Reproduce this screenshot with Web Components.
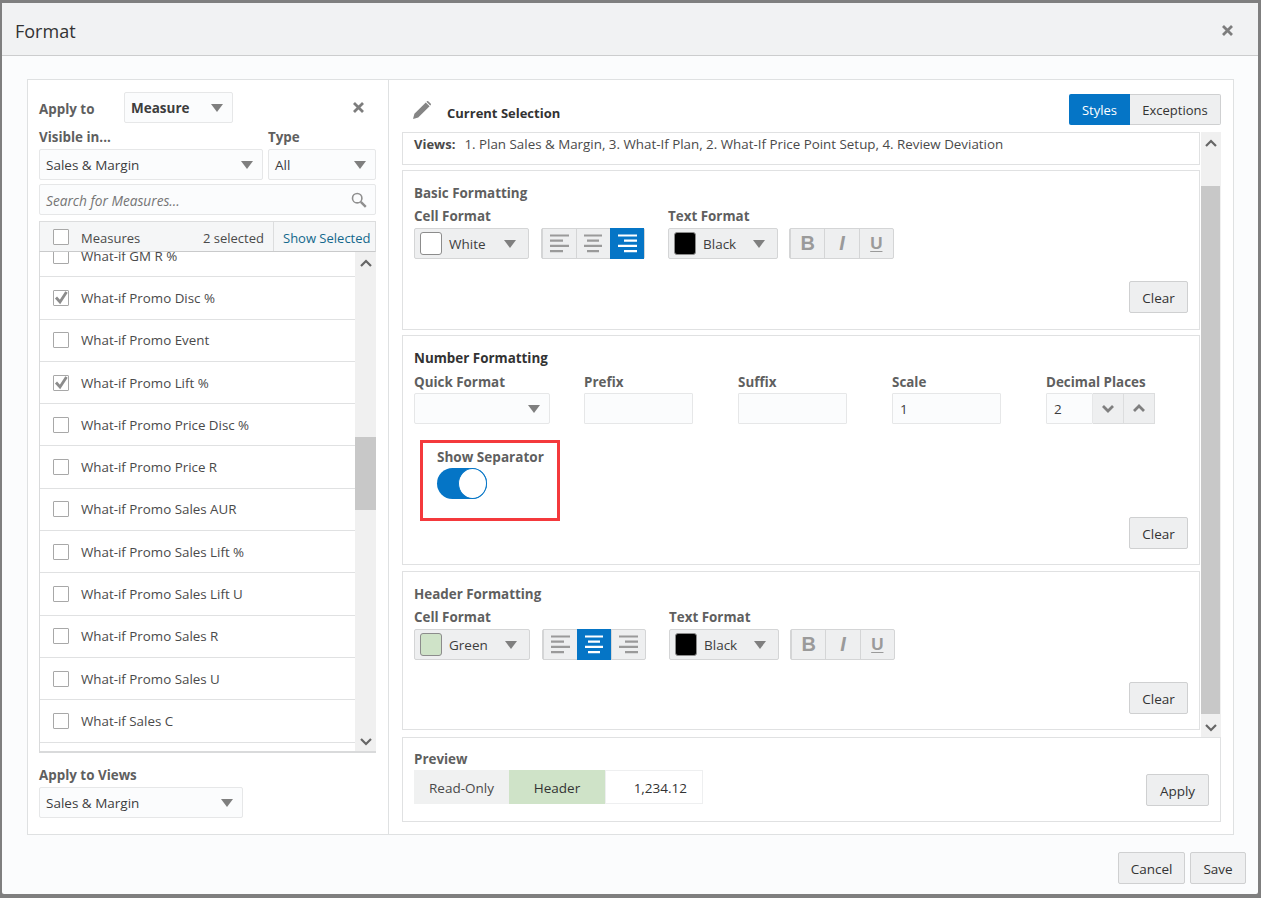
<!DOCTYPE html>
<html>
<head>
<meta charset="utf-8">
<title>Format</title>
<style>
  html, body { margin: 0; height: 100%; background: #7f7f7f; }
  body { padding: 3px 3px 4px 2px; box-sizing: border-box; font: 13px "Open Sans", "Liberation Sans", sans-serif; color: #3d3d3d; }
  format-dialog { height: 891px; }
</style>
</head>
<body>
<format-dialog heading="Format">
  <measure-panel slot="left"></measure-panel>
  <selection-panel slot="right"></selection-panel>
  <ui-button slot="footer" w="67">Cancel</ui-button>
  <ui-button slot="footer" w="56">Save</ui-button>
</format-dialog>

<script>
const BLUE = '#0575c6'
const CARET = '<svg width="12" height="8" viewBox="0 0 12 8"><path d="M0 0h12L6 8z" fill="#7f7f7f"/></svg>'
const X_ICON = '<svg width="13" height="13" viewBox="0 0 13 13"><path d="M2 2l9 9M11 2l-9 9" stroke="#7d7d7d" stroke-width="2.8" fill="none"/></svg>'
const chevron = (up, c = '#666', w = 2.2) => `<svg width="14" height="9" viewBox="0 0 14 9"><path d="${up ? 'M2 7l5-5 5 5' : 'M2 2l5 5 5-5'}" stroke="${c}" stroke-width="${w}" fill="none"/></svg>`

/** Base class: fills an open shadow root from a string. */
class Base extends HTMLElement {
  render (css, html) {
    if (!this.shadowRoot) this.attachShadow({ mode: 'open' })
    this.shadowRoot.innerHTML = `<style>${css}</style>${html}`
  }
}

class UiButton extends Base {
  connectedCallback () {
    this.render(`
      :host { display: inline-flex; box-sizing: border-box; width: ${this.getAttribute('w') || 59}px; height: 32px;
        align-items: center; justify-content: center; background: #eeeff0; border: 1px solid #cfd0d1; border-radius: 2px;
        color: #333; font-size: 13.5px; padding-top: 2px; }
    `, '<slot></slot>')
  }
}

class UiLabel extends Base {
  connectedCallback () {
    this.render(`
      :host { display: block; color: ${this.getAttribute('c') || '#5f5f5f'}; font-weight: 700; font-size: ${this.getAttribute('fs') || 13.4}px; line-height: 18px; white-space: nowrap; }
    `, '<slot></slot>')
  }
}

class UiSelect extends Base {
  connectedCallback () {
    const swatch = this.getAttribute('swatch')
    const grey = swatch !== null
    this.render(`
      :host { display: flex; box-sizing: border-box; width: ${this.getAttribute('w')}px; height: 31px; align-items: center;
        padding: 0 ${grey ? 12 : 9}px 0 ${grey ? 5 : 6}px; background: ${grey ? '#eeeff0' : '#fbfcfd'}; border: 1px solid ${grey ? '#d4d5d6' : '#e6e7e8'}; border-radius: 2px;
        color: #3d3d3d; font-size: 13.5px; font-weight: ${this.hasAttribute('bold') ? 700 : 400}; }
      .sw { width: 22px; height: 23px; box-sizing: border-box; border-radius: 3px; margin-right: 7px; border: 1px solid #8c8c8c; background: ${swatch}; }
      .t { flex: 1; white-space: nowrap; }
    `, `${grey ? '<span class="sw"></span>' : ''}<span class="t"><slot></slot></span>${CARET}`)
  }
}

class UiInput extends Base {
  connectedCallback () {
    this.render(`
      :host { display: flex; box-sizing: border-box; width: ${this.getAttribute('w')}px; height: 31px; align-items: center; padding: 0 7px;
        background: #fbfcfd; border: 1px solid #e6e7e8; border-radius: 1px; font-size: 13.5px; color: #3d3d3d; }
    `, '<slot></slot>')
  }
}

class AlignGroup extends Base {
  connectedCallback () {
    const active = this.getAttribute('active')
    const lines = {
      left: [[0, 19], [0, 13], [0, 19], [0, 13]],
      center: [[0, 18], [3, 12], [0, 18], [3, 12]],
      right: [[0, 19], [6, 13], [0, 19], [6, 13]]
    }
    const cells = Object.keys(lines).map(k => {
      const c = k === active ? '#fff' : '#9a9a9a'
      const d = lines[k].map((l, i) => `M${l[0]} ${1.5 + i * 5.2}h${l[1]}`).join('')
      return `<div class="c ${k === active ? 'on' : ''}"><svg width="19" height="19" viewBox="0 0 19 19"><path d="${d}" stroke="${c}" stroke-width="2.2"/></svg></div>`
    }).join('')
    this.render(`
      :host { display: flex; box-sizing: border-box; width: 104px; height: 31px; background: #eeeff0; border: 1px solid #d4d5d6; border-radius: 2px; }
      .c { flex: 1; display: flex; align-items: center; justify-content: center; border-left: 1px solid #d4d5d6; margin: -1px 0; }
      .c:first-child { border-left: 0; }
      .on { background: ${BLUE}; border-color: ${BLUE}; }
    `, cells)
  }
}

class StyleGroup extends Base {
  connectedCallback () {
    this.render(`
      :host { display: flex; box-sizing: border-box; width: 105px; height: 31px; background: #eeeff0; border: 1px solid #d4d5d6; border-radius: 2px;
        font: 700 20px "Liberation Sans", sans-serif; color: #9a9a9a; }
      div { flex: 1; display: flex; align-items: center; justify-content: center; border-left: 1px solid #d4d5d6; }
      div:first-child { border-left: 0; }
      u { font-size: 17px; text-underline-offset: 2px; }
    `, '<div>B</div><div><i>I</i></div><div><u>U</u></div>')
  }
}

class UiCheck extends Base {
  connectedCallback () {
    const tick = this.hasAttribute('checked') ? '<svg width="16" height="16" viewBox="0 0 16 16"><path d="M3 7.5l4 4.5 6.5-10" stroke="#8c8c8c" stroke-width="2.8" fill="none"/></svg>' : ''
    this.render(`
      :host { display: block; box-sizing: border-box; width: 16px; height: 16px; border: 1px solid #a8a8a8; border-radius: 1px; background: #fff; flex: none; }
      svg { display: block; margin: -1px; }
    `, tick)
  }
}

class MeasureRow extends Base {
  connectedCallback () {
    this.render(`
      :host { display: flex; box-sizing: border-box; height: 42.3px; align-items: center; gap: 12px; padding-left: 13px; border-bottom: 1px solid #e0e1e2;
        font-size: 13.35px; color: #4a4a4a; white-space: nowrap; }
    `, `<ui-check ${this.hasAttribute('checked') ? 'checked' : ''}></ui-check><slot></slot>`)
  }
}

class UiScrollbar extends Base {
  connectedCallback () {
    const before = this.getAttribute('before')
    const after = this.getAttribute('after')
    this.render(`
      :host { display: flex; flex-direction: column; width: ${this.getAttribute('w')}px; background: #f0f0f0; flex: none; align-items: stretch; }
      .b, .a { display: flex; justify-content: center; flex: none; }
      .b { height: ${before}px; padding-top: 7px; box-sizing: border-box; }
      .a { height: ${after}px; align-items: flex-end; padding-bottom: 5px; box-sizing: border-box; }
      .s { flex: none; height: ${this.getAttribute('thumb')}px; background: #c8c8c8; margin-right: ${this.getAttribute('inset') || 0}px; }
      .g { flex: 1; }
    `, `<div class="b">${chevron(true)}</div><div class="s"></div><div class="g"></div><div class="a">${chevron(false)}</div>`)
  }
}

class MeasurePanel extends Base {
  connectedCallback () {
    const rows = [
      ['What-if GM R %'], ['What-if Promo Disc %', 1], ['What-if Promo Event'], ['What-if Promo Lift %', 1],
      ['What-if Promo Price Disc %'], ['What-if Promo Price R'], ['What-if Promo Sales AUR'], ['What-if Promo Sales Lift %'],
      ['What-if Promo Sales Lift U'], ['What-if Promo Sales R'], ['What-if Promo Sales U'], ['What-if Sales C']
    ].map(r => `<measure-row ${r[1] ? 'checked' : ''}>${r[0]}</measure-row>`).join('')
    this.render(`
      :host { display: block; box-sizing: border-box; width: 361px; padding: 12px 12px 0 11px; border-right: 1px solid #dfe1e2; }
      .apply { display: flex; align-items: center; height: 31px; }
      .apply ui-label { width: 85px; padding-top: 3px; }
      .apply .x { margin-left: auto; margin-right: 11px; display: flex; }
      .two { display: flex; gap: 5px; }
      .search { display: flex; align-items: center; justify-content: space-between; box-sizing: border-box; height: 31px; margin-top: 4px; padding: 0 8px 0 6px;
        background: #fbfcfd; border: 1px solid #e6e7e8; border-radius: 2px; font-style: italic; color: #757575; font-size: 13.7px; }
      .search span { padding-top: 1px; }
      .thead { display: flex; align-items: center; box-sizing: border-box; height: 31px; margin-top: 6px; padding-left: 13px; background: #f5f6f7; border: 1px solid #dcddde; border-bottom-color: #c9cacb;
        font-size: 13px; color: #4a4a4a; white-space: nowrap; }
      .thead .m { margin-left: 12px; padding-top: 2px; }
      .thead .n { margin-left: auto; padding: 2px 9px 0 0; }
      .thead .ss { box-sizing: border-box; height: 100%; display: flex; align-items: center; width: 102px; padding: 2px 0 0 9px; border-left: 1px solid #dcddde; color: #13688c; }
      .list { display: flex; height: 501px; box-sizing: border-box; border-left: 1px solid #d9dadb; border-bottom: 2px solid #d9dadb; }
      .rows { flex: 1; overflow: hidden; min-width: 0; }
      .inner { margin-top: -17px; }
      .views { margin-top: 13px; }
      .views ui-select { margin-top: 3px; }
    `, `
      <div class="apply">
        <ui-label>Apply to</ui-label>
        <ui-select w="109" bold>Measure</ui-select>
        <span class="x">${X_ICON}</span>
      </div>
      <div class="two" style="margin-top:5px">
        <ui-label style="width:224px">Visible in...</ui-label>
        <ui-label>Type</ui-label>
      </div>
      <div class="two" style="margin-top:3px">
        <ui-select w="224">Sales &amp; Margin</ui-select>
        <ui-select w="108">All</ui-select>
      </div>
      <div class="search"><span>Search for Measures...</span>
        <svg width="16" height="16" viewBox="0 0 16 16"><circle cx="6.2" cy="6.2" r="4.7" stroke="#8f8f8f" stroke-width="1.6" fill="none"/><path d="M9.8 9.8l5 5" stroke="#8f8f8f" stroke-width="2.4"/></svg>
      </div>
      <div class="thead"><ui-check></ui-check><span class="m">Measures</span><span class="n">2 selected</span><span class="ss">Show Selected</span></div>
      <div class="list">
        <div class="rows"><div class="inner">${rows}</div></div>
        <ui-scrollbar w="21" before="185" thumb="73" after="24"></ui-scrollbar>
      </div>
      <div class="views">
        <ui-label>Apply to Views</ui-label>
        <ui-select w="204">Sales &amp; Margin</ui-select>
      </div>
    `)
  }
}

class FormatCard extends Base {
  connectedCallback () {
    this.render(`
      :host { display: flex; flex-direction: column; box-sizing: border-box; flex: none; height: ${this.getAttribute('h')}px; padding: 13px 11px ${this.getAttribute('pb') || 15}px 11px;
        background: #fff; border: 1px solid #e0e1e2; }
      .foot { margin-top: auto; display: flex; justify-content: flex-end; }
    `, '<slot></slot><div class="foot"><slot name="foot"></slot></div>')
  }
}

class FormatRow extends Base {
  connectedCallback () {
    const color = this.getAttribute('cell')
    const swatch = this.getAttribute('swatch')
    this.render(`
      :host { display: block; margin-top: 5px; }
      .labels, .ctl { display: flex; }
      .labels ui-label:first-child { width: ${this.getAttribute('w1')}px; }
      .ctl { margin-top: 3px; align-items: center; }
      .sp1 { width: 12px; } .sp2 { width: 23px; } .sp3 { width: 11px; }
    `, `
      <div class="labels"><ui-label>Cell Format</ui-label><ui-label>Text Format</ui-label></div>
      <div class="ctl">
        <ui-select w="${this.getAttribute('sw')}" swatch="${swatch}">${color}</ui-select><span class="sp1"></span>
        <align-group active="${this.getAttribute('active')}"></align-group><span class="sp2"></span>
        <ui-select w="110" swatch="#000">Black</ui-select><span class="sp3"></span>
        <style-group></style-group>
      </div>`)
  }
}

class ShowSeparator extends Base {
  connectedCallback () {
    this.render(`
      :host { display: block; flex: none; box-sizing: border-box; width: 140px; height: 81px; margin: 16px 0 -4px 6px; padding: 5px 14px; border: 3px solid #f4393c; }
      .t { display: block; position: relative; box-sizing: border-box; width: 50px; height: 31px; margin-top: 2px; background: ${BLUE}; border-radius: 16px; }
      .k { position: absolute; right: 0; top: 0; box-sizing: border-box; width: 29px; height: 31px; border-radius: 50%; background: #fff; border: 1.5px solid ${BLUE}; }
    `, '<ui-label fs="13.55">Show Separator</ui-label><span class="t"><span class="k"></span></span>')
  }
}

class SelectionPanel extends Base {
  connectedCallback () {
    this.render(`
      :host { display: flex; flex-direction: column; box-sizing: border-box; flex: 1; min-width: 0; padding: 14px 12px 11px 13px; }
      .top { display: flex; align-items: center; height: 31px; margin-bottom: 7px; }
      .top svg { margin: 0 16px 0 11px; }
      .top b { color: #333; font-size: 13px; padding-top: 7px; }
      .tabs { margin-left: auto; display: flex; font-size: 13px; }
      .tabs span { box-sizing: border-box; height: 31px; display: flex; align-items: center; justify-content: center; }
      .tabs .on { width: 61px; background: ${BLUE}; color: #fff; border-radius: 2px 0 0 2px; }
      .tabs .off { width: 91px; background: #eeeff0; color: #333; border: 1px solid #cfd0d1; border-left: 0; border-radius: 0 2px 2px 0; }
      .scroll { display: flex; height: 605px; }
      .cards { flex: 1; min-width: 0; display: flex; flex-direction: column; margin-right: 1px; }
      .views { box-sizing: border-box; flex: none; height: 33px; display: flex; align-items: center; padding: 0 11px 9px; border: 1px solid #e0e1e2; white-space: nowrap; font-size: 13.37px; color: #4a4a4a; margin-bottom: 5px; }
      .views b { color: #4a4a4a; margin-right: 9px; font-size: 13px; }
      .nums { display: flex; margin-top: 6px; }
      .nums > div { flex: none; }
      .nums ui-label { margin-bottom: 2px; }
      .dec { display: flex; }
      .dec span { box-sizing: border-box; width: 31px; height: 31px; display: flex; align-items: center; justify-content: center; background: #eeeff0; border: 1px solid #dcddde; border-left: 0; }
      .mid { margin: 5px 0 6px; }
      .preview { box-sizing: border-box; height: 85px; padding: 12px 11px 0 11px; border: 1px solid #e0e1e2; display: flex; flex-direction: column; background: #fff; }
      .pv { display: flex; font-size: 13.5px; height: 34px; margin-top: 2px; }
      .pv span { display: flex; align-items: center; justify-content: center; box-sizing: border-box; width: 95px; padding-top: 2px; color: #4a4a4a; }
      .pv .h { background: #cfe3c8; width: 96px; color: #333; }
      .pv .v { width: 98px; justify-content: flex-end; padding-right: 15px; border: 1px solid #eeeff0; background: #fff; color: #333; }
      .pv .r { background: #f0f1f1; }
      .prow { display: flex; align-items: flex-start; justify-content: space-between; }
    `, `
      <div class="top">
        <svg width="18" height="18" viewBox="0 0 18 18"><path d="M0 18l1.4-5.2L12.8 1.4l3.8 3.8L5.2 16.6zM13.8.4a1.2 1.2 0 0 1 1.7 0l2.1 2.1a1.2 1.2 0 0 1 0 1.7l-.4.4-3.8-3.8z" fill="#858585"/></svg>
        <b>Current Selection</b>
        <div class="tabs"><span class="on">Styles</span><span class="off">Exceptions</span></div>
      </div>
      <div class="scroll">
        <div class="cards">
          <div class="views"><b>Views:</b>1. Plan Sales &amp; Margin, 3. What-If Plan, 2. What-If Price Point Setup, 4. Review Deviation</div>
          <format-card h="160" pb="16">
            <ui-label>Basic Formatting</ui-label>
            <format-row w1="254" sw="115" cell="White" swatch="#fff" active="right"></format-row>
            <ui-button slot="foot">Clear</ui-button>
          </format-card>
          <format-card h="230" class="mid">
            <ui-label c="#333">Number Formatting</ui-label>
            <div class="nums">
              <div style="width:170px"><ui-label>Quick Format</ui-label><ui-select w="136"></ui-select></div>
              <div style="width:154px"><ui-label>Prefix</ui-label><ui-input w="109"></ui-input></div>
              <div style="width:154px"><ui-label>Suffix</ui-label><ui-input w="109"></ui-input></div>
              <div style="width:154px"><ui-label>Scale</ui-label><ui-input w="109">1</ui-input></div>
              <div><ui-label>Decimal Places</ui-label>
                <div class="dec"><ui-input w="47">2</ui-input><span>${chevron(false, '#7f7f7f', 2.8)}</span><span>${chevron(true, '#7f7f7f', 2.8)}</span></div>
              </div>
            </div>
            <show-separator></show-separator>
            <ui-button slot="foot">Clear</ui-button>
          </format-card>
          <format-card h="159">
            <ui-label>Header Formatting</ui-label>
            <format-row w1="255" sw="116" cell="Green" swatch="#cfe3c8" active="center"></format-row>
            <ui-button slot="foot">Clear</ui-button>
          </format-card>
        </div>
        <ui-scrollbar w="20" before="54" thumb="528" after="23" inset="1"></ui-scrollbar>
      </div>
      <div class="preview">
        <ui-label>Preview</ui-label>
        <div class="prow">
          <div class="pv"><span class="r">Read-Only</span><span class="h">Header</span><span class="v">1,234.12</span></div>
          <ui-button w="63" style="margin-top:6px">Apply</ui-button>
        </div>
      </div>
    `)
  }
}

class FormatDialog extends Base {
  connectedCallback () {
    this.render(`
      :host { display: flex; flex-direction: column; box-sizing: border-box; background: #fbfcfd; border-radius: 2px; }
      header { display: flex; align-items: center; justify-content: space-between; box-sizing: border-box; height: 53px; padding: 3px 24px 0 13px;
        background: #f1f2f3; border-bottom: 1px solid #cccdce; font-size: 18px; color: #333; }
      .main { display: flex; flex: none; height: 756px; box-sizing: border-box; margin: 23px 24px 0 25px; background: #fff; border: 1px solid #dfe1e2; }
      footer { display: flex; justify-content: flex-end; gap: 5px; padding: 17px 12px 0 0; }
    `, `
      <header><span>${this.getAttribute('heading')}</span>${X_ICON}</header>
      <div class="main"><slot name="left"></slot><slot name="right"></slot></div>
      <footer><slot name="footer"></slot></footer>
    `)
  }
}

customElements.define('ui-button', UiButton)
customElements.define('ui-label', UiLabel)
customElements.define('ui-select', UiSelect)
customElements.define('ui-input', UiInput)
customElements.define('align-group', AlignGroup)
customElements.define('style-group', StyleGroup)
customElements.define('ui-check', UiCheck)
customElements.define('measure-row', MeasureRow)
customElements.define('ui-scrollbar', UiScrollbar)
customElements.define('measure-panel', MeasurePanel)
customElements.define('format-card', FormatCard)
customElements.define('format-row', FormatRow)
customElements.define('show-separator', ShowSeparator)
customElements.define('selection-panel', SelectionPanel)
customElements.define('format-dialog', FormatDialog)
</script>
</body>
</html>
